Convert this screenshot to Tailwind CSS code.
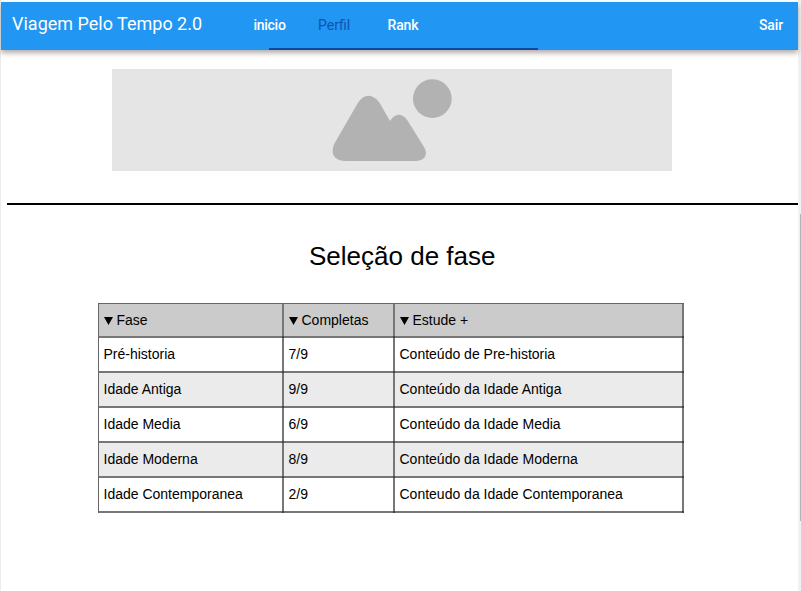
<!DOCTYPE html>
<html lang="pt">
<head>
<meta charset="utf-8">
<title>Viagem Pelo Tempo 2.0</title>
<script src="https://cdn.jsdelivr.net/npm/@tailwindcss/browser@4"></script>
</head>
<body class="w-[801px] h-[591px] overflow-hidden bg-white flex font-['Liberation_Sans',sans-serif] text-[14px] text-black">
<div class="w-px shrink-0 bg-[#ececec]"></div>
<main class="w-[797px] shrink-0 flex flex-col pt-[2px]">
  <nav class="relative h-12 shrink-0 bg-[#2196f3] shadow-[0_3px_5px_rgba(90,70,60,0.45)] flex font-[Roboto,sans-serif] text-white text-[14px] font-medium leading-[46px]">
    <div class="w-[241px] pl-[11px] text-[18px] font-normal leading-[44px] whitespace-nowrap">Viagem Pelo Tempo 2.0</div>
    <div class="w-[76px] pl-[11.5px] tracking-[-0.02em]">inicio</div>
    <div class="w-[69.5px] font-normal text-[#0d55ad]">Perfil</div>
    <div class="flex-1 tracking-[-0.01em]">Rank</div>
    <div class="pr-[15px] tracking-[-0.01em]">Sair</div>
    <div class="absolute left-[268px] bottom-0 w-[269px] h-[2px] bg-[#0d47a1]"></div>
  </nav>
  <div class="mt-[19px] ml-[111px] w-[560px] h-[102px] shrink-0 bg-[#e5e5e5]">
    <svg class="block w-full h-full" viewBox="0 0 560 102">
      <g transform="translate(208 -4) scale(.33333)" fill="#b2b2b2">
        <circle cx="337" cy="101" r="58"/>
        <path d="M43 236L113 115Q126 93 145 92Q165 93 179 114L210 168Q222 149 237 149Q251 149 263 167L312 246Q321 260 316 273Q310 287 289 288H75Q47 288 39 268Q36 250 43 236Z"/>
      </g>
    </svg>
  </div>
  <hr class="mt-8 ml-[6px] shrink-0 border-0 h-[2px] bg-black">
  <h1 class="mt-[34px] ml-[308px] text-[26px] leading-[34px]">Seleção de fase</h1>
  <div class="mt-[30px] ml-[97px] w-[586px] shrink-0 border-t border-l border-[#666] grid grid-cols-[185px_111px_289px] grid-rows-[34px_repeat(5,35px)] leading-[33px] text-[14px] [&>div]:relative [&>div]:border-r-2 [&>div]:border-b-2 [&>div]:border-[#777] [&>div]:pl-[4.5px] [&>div]:whitespace-nowrap [&>div]:after:absolute [&>div]:after:-right-[2px] [&>div]:after:-bottom-[2px] [&>div]:after:size-[2px] [&>div]:after:bg-[#444] [&>div]:after:content-['']">
    <div class="bg-[#cbcbcb] flex items-center gap-[5px]"><svg class="w-[9px] h-2 mt-[2px]" viewBox="0 0 9 8"><path d="M0 0H9L4.5 8Z"/></svg><span class="-ml-px">Fase</span></div>
    <div class="bg-[#cbcbcb] flex items-center gap-[5px]"><svg class="w-[9px] h-2 mt-[2px]" viewBox="0 0 9 8"><path d="M0 0H9L4.5 8Z"/></svg><span class="-ml-px">Completas</span></div>
    <div class="bg-[#cbcbcb] flex items-center gap-[5px]"><svg class="w-[9px] h-2 mt-[2px]" viewBox="0 0 9 8"><path d="M0 0H9L4.5 8Z"/></svg><span class="-ml-px">Estude +</span></div>
    <div>Pré-historia</div><div>7/9</div><div>Conteúdo de Pre-historia</div>
    <div class="bg-[#ebebeb]">Idade Antiga</div><div class="bg-[#ebebeb]">9/9</div><div class="bg-[#ebebeb]">Conteúdo da Idade Antiga</div>
    <div>Idade Media</div><div>6/9</div><div>Conteúdo da Idade Media</div>
    <div class="bg-[#ebebeb]">Idade Moderna</div><div class="bg-[#ebebeb]">8/9</div><div class="bg-[#ebebeb]">Conteúdo da Idade Moderna</div>
    <div>Idade Contemporanea</div><div>2/9</div><div>Conteudo da Idade Contemporanea</div>
  </div>
</main>
<aside class="w-[3px] shrink-0 bg-[#f1f1f1] flex flex-col items-end"><div class="mt-[214px] w-px h-[307px] bg-[#b5b5b5]"></div></aside>
</body>
</html>
